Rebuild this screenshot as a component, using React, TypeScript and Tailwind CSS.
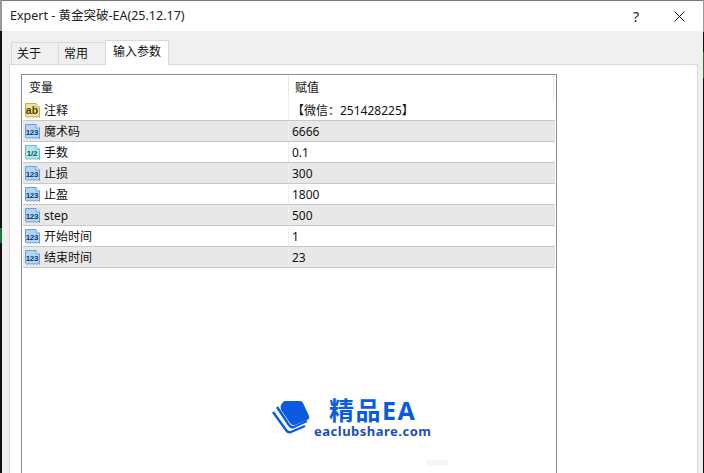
const FONT = "font-['Noto_Sans','Noto_Sans_CJK_SC',sans-serif]";

type Param = { name: string; value: string; kind: "str" | "int" | "dbl" };

const params: Param[] = [
  { name: "注释", value: "【微信：251428225】", kind: "str" },
  { name: "魔术码", value: "6666", kind: "int" },
  { name: "手数", value: "0.1", kind: "dbl" },
  { name: "止损", value: "300", kind: "int" },
  { name: "止盈", value: "1800", kind: "int" },
  { name: "step", value: "500", kind: "int" },
  { name: "开始时间", value: "1", kind: "int" },
  { name: "结束时间", value: "23", kind: "int" },
];

const iconColors = {
  str: { fill: "#f0e39a", stroke: "#bfae55", text: "#4f4106", label: "ab" },
  int: { fill: "#b4d4f3", stroke: "#6a9fd2", text: "#0a3a78", label: "123" },
  dbl: { fill: "#b2e8ea", stroke: "#62bcc4", text: "#0a5562", label: "1/2" },
};

function TypeIcon({ kind }: { kind: Param["kind"] }) {
  const c = iconColors[kind];
  return (
    <svg width="17" height="17" viewBox="0 0 17 17" className="shrink-0">
      <path
        d="M1.5 1.5H12L15.5 5V15.5L14 14.2L12.5 15.5L11 14.2L9.5 15.5L8 14.2L6.5 15.5L5 14.2L3.5 15.5L1.5 14.2Z"
        fill={c.fill}
        stroke={c.stroke}
      />
      <path d="M12 1.5V5H15.5" fill="#ffffff" stroke={c.stroke} />
      <text
        x="8"
        y="11.5"
        textAnchor="middle"
        fontFamily="'Liberation Sans', sans-serif"
        fontWeight="700"
        fontSize={kind === "str" ? 10.5 : 8}
        letterSpacing={kind === "str" ? 0 : -0.2}
        fill={c.text}
      >
        {c.label}
      </text>
    </svg>
  );
}

function Tab({ label, active }: { label: string; active?: boolean }) {
  if (active) {
    return (
      <div className="relative z-10 -ml-px mb-[-1px] flex h-[25px] w-[64px] items-center border border-b-0 border-[#d9d9d9] bg-white pb-[2px] pl-[7px] text-[12px] text-[#111]">
        {label}
      </div>
    );
  }
  return (
    <div className="-ml-px flex h-[22px] w-[48px] items-center border border-b-0 border-[#d9d9d9] bg-[#f0f0f0] pl-[5px] text-[12px] text-[#111] first:ml-0">
      {label}
    </div>
  );
}

function Logo() {
  return (
    <div className="ml-[249px] mt-[128px] flex items-start">
      <svg width="38" height="34" viewBox="0 0 38 34" className="mt-[5px] shrink-0">
        <path d="M1 11 L14 29 Q16 32 19 31 L33 25" fill="none" stroke="#0b5be0" strokeWidth="2.4" />
        <path d="M5 6 L17 24 Q19 27 22 26 L35 20" fill="none" stroke="#0b5be0" strokeWidth="2.4" />
        <path d="M11 1 Q12 0 14 0 L28 0 Q30 0 31 2 L37 15 Q38 18 35 19 L23 24 Q20 25 18 22 L9 9 Q8 6 9 4Z" fill="#0b5be0" />
      </svg>
      <div className="ml-[4px] flex flex-col items-center pt-[2px]">
        <div className="h-[24px] text-[25px] font-bold leading-[24px] tracking-[1.5px] text-[#0b5be0]">
          精品EA
        </div>
        <div className="mt-[1px] text-[13px] font-bold leading-[17px] tracking-[0.5px] text-[#1b50b8]">
          eaclubshare.com
        </div>
      </div>
    </div>
  );
}

export default function App() {
  return (
    <div className={`flex h-[473px] w-[704px] overflow-hidden bg-[#f0f0f0] ${FONT}`}>
      <div className="flex w-[2px] shrink-0 flex-col bg-[#111]">
        <div className="h-[31px] bg-[#999]" />
        <div className="mt-[197px] h-[15px] bg-[#1a7a2a]" />
      </div>
      <div className="flex min-w-0 flex-1 flex-col">
        <div className="flex h-[31px] shrink-0 items-center border-t border-[#777] bg-white pl-[8px] text-[12.5px] text-[#222]">
          <span className="flex-1">Expert - 黄金突破-EA(25.12.17)</span>
          <span className="mr-[35px] text-[14px]">?</span>
          <svg width="11" height="11" viewBox="0 0 11 11" className="mr-[18px]">
            <path d="M0.5 0.5L10.5 10.5M10.5 0.5L0.5 10.5" stroke="#111" strokeWidth="1" />
          </svg>
        </div>

        <div className="flex min-h-0 flex-1 flex-col pl-[7px] pr-[5px]">
          <div className="flex h-[33px] shrink-0 items-end pl-[2px]">
            <Tab label="关于" />
            <Tab label="常用" />
            <Tab label="输入参数" active />
          </div>

          <div className="min-h-0 flex-1 border-l border-r border-t border-[#d9d9d9] bg-white pl-[11px] pt-[9px]">
            <div className="h-[420px] w-[536px] border-l border-r border-t border-[#8a8a96] bg-white px-px">
              <div className="flex h-[25px] text-[12px] text-[#111]">
                <div className="w-[265px] pl-[6px] pt-[4px]">变量</div>
                <div className="my-[1px] w-px bg-[#e8e8e8]" />
                <div className="flex-1 pl-[6px] pt-[4px]">赋值</div>
                <div className="mr-[1px] w-px bg-[#e8e8e8]" />
              </div>

              {params.map((p, i) => (
                <div
                  key={p.name}
                  className={`flex h-[21px] items-center border-b border-[#c8c8c8] text-[12px] text-[#111] ${
                    i % 2 === 1 ? "bg-[#e8e8e8]" : "bg-white"
                  }`}
                >
                  <div className="flex w-[265px] items-center gap-[3px] pl-[1px]">
                    <TypeIcon kind={p.kind} />
                    <span className="pt-[2px]">{p.name}</span>
                  </div>
                  <div className="h-full w-px bg-[#f0f0f0]" />
                  <div className="pl-[3px] pt-[2px]">{p.value}</div>
                </div>
              ))}

              <Logo />
              <div className="ml-[403px] mt-[20px] h-[6px] w-[22px] rounded-sm bg-[#f6f6f6]" />
            </div>
          </div>
        </div>
      </div>
      <div className="flex w-px shrink-0 flex-col bg-[#111]">
        <div className="h-[32px] bg-[#999]" />
        <div className="mt-[20px] h-[26px] bg-[#1a7a2a]" />
      </div>
    </div>
  );
}
